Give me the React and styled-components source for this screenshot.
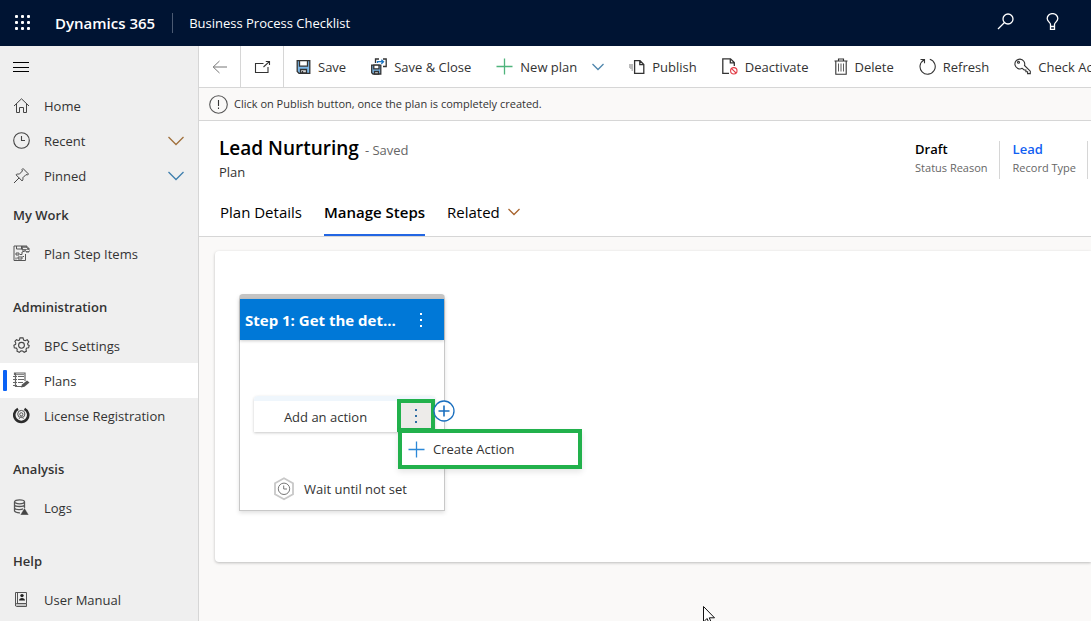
import React from "react";
import styled, { createGlobalStyle } from "styled-components";

const Global = createGlobalStyle`
  * { box-sizing: border-box; }
  body {
    margin: 0;
    font-family: "Open Sans", "Noto Sans", sans-serif;
    font-size: 13px;
    line-height: 20px;
    color: #333;
    background: #faf9f8;
    overflow: hidden;
  }
  button {
    font: inherit;
    color: inherit;
    background: none;
    border: 0;
    padding: 0;
    cursor: pointer;
  }
  a { color: inherit; text-decoration: none; }
  h1, h2, h3, p, ul { margin: 0; padding: 0; font: inherit; list-style: none; }
  svg { display: block; flex: none; }
`;

const Page = styled.div`
  display: flex;
  flex-direction: column;
  height: 100vh;
  overflow: hidden;
`;

const TopBar = styled.header`
  display: flex;
  align-items: center;
  flex: none;
  height: 46px;
  padding: 0 32px 0 14px;
  background: #001433;
  color: #fff;
`;

const Brand = styled.span`
  margin-left: 24px;
  padding-right: 17px;
  font-size: 15px;
  font-weight: 600;
  white-space: nowrap;
`;

const AppName = styled.span`
  padding-left: 16px;
  border-left: 1px solid #4b5a72;
  white-space: nowrap;
`;

const TopActions = styled.div`
  display: flex;
  gap: 32px;
  margin-left: auto;
  padding-bottom: 4px;
`;

const Body = styled.div`
  display: flex;
  flex: 1;
  min-height: 0;
`;

const Sidebar = styled.nav`
  flex: none;
  width: 199px;
  background: #efefef;
  border-right: 1px solid #d6d6d6;
`;

const MenuToggle = styled.button`
  display: flex;
  align-items: center;
  width: 100%;
  height: 42px;
  padding-left: 13px;
`;

const NavHeading = styled.h2`
  height: 43px;
  margin-top: ${(p) => (p.$first ? 0 : 14)}px;
  padding-left: 13px;
  font-weight: 600;
  line-height: 45px;
`;

const NavLink = styled.a`
  position: relative;
  display: flex;
  align-items: center;
  gap: 14px;
  height: 35px;
  padding: 0 14px 0 13px;
  background: ${(p) => (p.$active ? "#fff" : "transparent")};

  &::before {
    content: "";
    display: ${(p) => (p.$active ? "block" : "none")};
    position: absolute;
    left: 3px;
    top: 7px;
    width: 4px;
    height: 21px;
    border-radius: 1px;
    background: #0b62f5;
  }

  svg:last-child:not(:first-child) { margin-left: auto; }
`;

const Main = styled.main`
  flex: 1;
  min-width: 0;
  overflow: hidden;
`;

const CommandBar = styled.div`
  display: flex;
  height: 42px;
  background: #fff;
  border-bottom: 1px solid #d6d6d6;
  overflow: hidden;
`;

const IconCommand = styled.button`
  display: flex;
  flex: none;
  align-items: center;
  justify-content: center;
  width: ${(p) => p.$width}px;
  border-right: 1px solid #d6d6d6;
`;

const CommandList = styled.div`
  display: flex;
`;

const Command = styled.button`
  display: flex;
  flex: none;
  align-items: center;
  gap: 7px;
  padding: 0 13px 0 12px;
  white-space: nowrap;
`;

const SplitChevron = styled.span`
  margin-left: 8px;
`;

const Notice = styled.p`
  display: flex;
  align-items: center;
  gap: 6px;
  height: 33px;
  padding-left: 10px;
  background: #faf9f8;
  border-bottom: 1px solid #d6d6d6;
  font-size: 11px;
`;

const RecordHeader = styled.section`
  background: #fff;
  border-bottom: 1px solid #d6d6d6;
`;

const RecordTop = styled.div`
  display: flex;
  justify-content: space-between;
  padding: 14px 3px 0 20px;
`;

const Title = styled.h1`
  font-size: 19px;
  font-weight: 600;
  line-height: 26px;
  color: #000;
  white-space: nowrap;
`;

const Saved = styled.span`
  padding-left: 6px;
  font-size: 13px;
  font-weight: 400;
  line-height: 13px;
  color: #666;
`;

const EntityName = styled.p`
  font-weight: 500;
  line-height: 22px;
`;

const Fields = styled.div`
  display: flex;
  margin-top: 6px;
`;

const Field = styled.div`
  height: 38px;
  padding: 0 11px 0 13px;
  border-right: 1px solid #d6d6d6;
  font-size: 11px;
  line-height: 20px;
  color: #666;
  white-space: nowrap;
`;

const FieldValue = styled.div`
  display: block;
  font-size: 13px;
  font-weight: 600;
  line-height: 17px;
  color: ${(p) => (p.$link ? "#1160f2" : "#000")};
`;

const Tabs = styled.div`
  display: flex;
  gap: 22px;
  height: 53px;
  padding-left: 21px;
`;

const Tab = styled.button`
  display: flex;
  align-items: center;
  gap: 8px;
  height: 53px;
  padding-top: 6px;
  border-bottom: 2px solid ${(p) => (p.$active ? "#2266e3" : "transparent")};
  font-size: 15px;
  font-weight: ${(p) => (p.$active ? 600 : 400)};
  color: #000;
  white-space: nowrap;
`;

const Canvas = styled.section`
  margin: 14px 0 0 16px;
  padding: 43px 24px 51px;
  background: #fff;
  border-radius: 4px 0 0 4px;
  box-shadow: 0 1px 3px rgba(0, 0, 0, 0.25);
`;

const StepCard = styled.article`
  width: 206px;
  border: 1px solid #c8c8c8;
  border-top: 5px solid #c4c4c4;
  border-radius: 4px 4px 0 0;
  box-shadow: 0 2px 4px rgba(0, 0, 0, 0.12);
`;

const StepHeader = styled.header`
  display: flex;
  align-items: center;
  justify-content: space-between;
  height: 41px;
  padding: 0 16px 0 5px;
  background: #0078d7;
  color: #fff;
  box-shadow: 0 1px 3px rgba(0, 0, 0, 0.2);
`;

const StepTitle = styled.h3`
  font-size: 15px;
  font-weight: 700;
`;

const StepBody = styled.div`
  padding: 56px 9px 9px 14px;
`;

const ActionRow = styled.div`
  position: relative;
  display: flex;
  height: 36px;
  border-top: 5px solid #eff6fc;
  border-radius: 4px 4px 0 0;
  box-shadow: 0 1px 3px rgba(0, 0, 0, 0.22);
`;

const AddAction = styled.button`
  flex: 1;
`;

const MoreButton = styled.button`
  display: flex;
  align-items: center;
  justify-content: center;
  width: 38px;
  height: 33px;
  margin-top: -2px;
  border: 4px solid #22b14c;
  background: #edebe9;
`;

const AddStep = styled.button`
  position: absolute;
  left: 179px;
  top: -1px;
`;

const ActionMenu = styled.div`
  position: absolute;
  left: 144px;
  top: 28px;
  z-index: 1;
  width: 184px;
  border: 4px solid #22b14c;
  background: #fff;
  box-shadow: 0 3px 6px rgba(0, 0, 0, 0.1);
`;

const MenuItem = styled.button`
  display: flex;
  align-items: center;
  gap: 8px;
  width: 100%;
  height: 32px;
  padding-left: 6px;
`;

const WaitRow = styled.div`
  display: flex;
  align-items: center;
  gap: 10px;
  margin-top: 45px;
  padding-left: 20px;
  height: 24px;
`;

const Pointer = styled.div`
  position: absolute;
  left: 703px;
  top: 606px;
  height: 15px;
  overflow: hidden;
  pointer-events: none;
`;

const Svg = ({ w = 16, h = w, color = "#333", sw = 1, children }) => (
  <svg width={w} height={h} viewBox={`0 0 ${w} ${h}`} fill="none" stroke={color} strokeWidth={sw} aria-hidden="true">
    {children}
  </svg>
);

const Waffle = () => (
  <Svg w={17} h={16}>
    {[0, 6, 12].map((y) =>
      [1, 7, 13].map((x) => (
        <rect key={`${x}-${y}`} x={x} y={y} width="3" height="3" rx="1" fill="#fff" stroke="none" />
      ))
    )}
  </Svg>
);
const SearchIcon = () => (
  <Svg w={17} color="#fff" sw={1.3}>
    <circle cx="11" cy="6" r="5" />
    <path d="M7.5 9.5L1 16" />
  </Svg>
);
const BulbIcon = () => (
  <Svg w={13} h={17} color="#fff" sw={1.3}>
    <path d="M4.5 13.5V11.5C4.5 9.5 1.2 8.5 1.2 5.6a5.3 5 0 0 1 10.6 0C11.8 8.5 8.5 9.5 8.5 11.5V16.3H4.5V13.5H8.5" />
  </Svg>
);
const Burger = () => (
  <Svg color="#000">
    <path d="M0 3.5H16M0 8.5H16M0 12.5H16" />
  </Svg>
);
const HomeIcon = () => (
  <Svg w={17} color="#444">
    <path d="M1 9L8.5 1.8L16 9M3.5 7V15.5H6.5V10.5H10.5V15.5H13.5V7" />
  </Svg>
);
const ClockIcon = () => (
  <Svg w={17} color="#444" sw={1.1}>
    <circle cx="8.5" cy="8.5" r="7.8" />
    <path d="M8.5 4V8.5H12" />
  </Svg>
);
const PinIcon = () => (
  <Svg w={17} color="#444">
    <path d="M10 1.5L15.5 7L14.5 8L13 7.6L9.8 10.8C10.2 12.2 9.8 13.2 9.2 14L3 7.8C3.8 7 5 6.8 6.3 7.2L9.4 4L9 2.5ZM6.1 10.9L1 16" />
  </Svg>
);
const Chevron = ({ w = 16, color = "#666" }) => (
  <Svg w={w} h={w / 2 + 2} color={color} sw={1.3}>
    <path d={`M.5 1L${w / 2} ${w / 2 + 0.5}L${w - 0.5} 1`} />
  </Svg>
);
const StepItemsIcon = () => (
  <Svg w={17} color="#555">
    <path d="M9 1H1V15.5H12.5V9M3.5 1V4H8.5V1M3 8H6V10H3ZM5 12H9V14H5ZM7 9.5H9V7L12 6M3 12.5V14.5M9.5 11.5H11" />
    <path d="M9 1H14V3H16V7H13V5H9Z" fill="#888" />
    <path d="M10 3.5H14M13 5.5H16" stroke="#efefef" />
  </Svg>
);
const GearIcon = () => (
  <Svg w={17} color="#444" sw={1.1}>
    <path d="M7 .9H10L10.6 3L12.2 3.7L14.2 2.8L15.8 4.8L14.6 6.7L14.9 7.8L16.2 8.5L15.6 10.8L13.8 11L13 12.2L13.4 14.1L11.2 15.3L9.7 14L8 13.9L6.3 15.3L4 14.2L4.2 12.3L3.4 11.1L1.3 10.8L.9 8.3L2.6 7.3L2.8 6.1L1.9 4.4L3.5 2.7L5.3 3.5L6.4 3Z" />
    <circle cx="8.5" cy="8.3" r="2.9" />
  </Svg>
);
const PlansIcon = () => (
  <Svg w={17} color="#666" sw={1.2}>
    <path d="M12 9V1H1.5V3M2.5 1V14.5H9M0 4.5H4M0 7.5H4M0 10.5H4M0 13.5H4M5 4.5H11M5 7.5H11M5 10.5H10" />
    <path d="M8 15.5L9 12.5L14 8.5L16.5 10.5L11.5 14.8Z" fill="#555" stroke="none" />
    <path d="M3 2.5H11" stroke="#888" />
  </Svg>
);
const LicenseIcon = () => (
  <Svg w={17} color="#2b2b2b">
    <path d="M5 1.8A7 7 0 1 0 11.5 1.8" strokeWidth="2.6" />
    <circle cx="8.3" cy="7" r="3.6" stroke="#555" />
    <circle cx="8.3" cy="7.3" r="1.6" stroke="#555" />
    <path d="M6 12L8.3 9L10.6 12" stroke="#777" />
  </Svg>
);
const LogsIcon = () => (
  <Svg w={17} color="#555" sw={1.3}>
    <ellipse cx="6.5" cy="2.8" rx="5" ry="2" />
    <path d="M1.5 3V12C2.2 13.2 4 13.9 7 13.8M11.5 3V9M1.5 6C2.5 8 10.5 8 11.5 6M1.5 9C2.5 11 8.5 11.2 10 9.8" />
    <path d="M11.5 8.8L15.8 16H7.2Z" fill="#444" stroke="#efefef" strokeWidth=".4" />
  </Svg>
);
const ManualIcon = () => (
  <Svg w={17} color="#555">
    <path d="M2.5 14V1.5H13.5V12.5H3.5C2 12.5 2 15.5 3.5 15.5H13.5V12.5M4.5 1.5V12.5" />
    <path d="M3 14H13" stroke="#999" />
    <circle cx="9" cy="4.6" r="1.7" fill="#222" stroke="none" />
    <path d="M6 9.5C6 6 12 6 12 9.5Z" fill="#222" stroke="none" />
  </Svg>
);
const BackIcon = () => (
  <Svg w={15} h={14} color="#777">
    <path d="M7.5 1L1.2 7L7.5 13M1.2 7H15" />
  </Svg>
);
const PopoutIcon = () => (
  <Svg w={17} h={14} color="#333" sw={1.1}>
    <path d="M9.5 3.5H1.5V12.5H14V7M9.5 7L15.3 1.6M11.8 1.5H15.5V5" />
  </Svg>
);
const SaveIcon = () => (
  <Svg w={15} sw={1.3}>
    <path d="M1.2 1.7H13.8V14.3H3L1.2 12.5Z" fill="#7db8e8" />
    <path d="M3.5 1.7H11.5V7.2H3.5Z" fill="#fff" />
    <path d="M4.5 14V10.5H10.5V14Z" fill="#ddd" />
    <path d="M6.5 12V14" />
  </Svg>
);
const SaveCloseIcon = () => (
  <Svg w={16} h={17} sw={1.3}>
    <path d="M.7 7.2H9.8V16H2L.7 14.8Z" fill="#7db8e8" />
    <path d="M2.8 7.2H8V10.8H2.8Z" fill="#fff" />
    <path d="M3.5 16V13.5H7.5V16Z" fill="#ddd" />
    <path d="M4.5 5V1H8M12 1H15.2V8.5H12" />
    <path d="M6.5 5V3.7H12M10.3 1.7L12.5 3.7L10.3 5.8" stroke="#1a73c0" />
  </Svg>
);
const PlusIcon = ({ color }) => (
  <Svg w={17} color={color} sw={1.3}>
    <path d="M8.5 .5V16.5M.5 8.5H16.5" />
  </Svg>
);
const PublishIcon = () => (
  <Svg w={16} sw={1.3}>
    <path d="M5.6 1.7H11L14.8 5.5V14.4H5.6ZM10.8 2V5.7H14.5" />
    <path d="M0 5H1V9H0ZM1 5H2.5V10H1ZM2.5 5H4V12H2.5Z" fill="#bbb" stroke="none" />
  </Svg>
);
const DeactivateIcon = () => (
  <Svg w={16} h={17} sw={1.3}>
    <path d="M7 15.4H.8V.8H8.5L12.3 4.6V8M8.3 1V4.8H12" />
    <g stroke="#e23b45" strokeWidth="1.1">
      <circle cx="11.8" cy="12.8" r="3.2" />
      <path d="M9.6 10.6L14 15" />
    </g>
  </Svg>
);
const DeleteIcon = () => (
  <Svg w={14} h={17} sw={1.1}>
    <path d="M.5 3H13.5M4.5 3V1H9.5V3M1.8 3V16.2H12.2V3" />
    <path d="M4.5 5.5V13.5M7 5.5V13.5M9.5 5.5V13.5" strokeWidth=".8" />
  </Svg>
);
const RefreshIcon = () => (
  <Svg w={17} h={17} sw={1.1}>
    <path d="M10.8 1.3A7.6 7.6 0 1 1 5 1.9M1.5 1.5H5.5V5.2" />
  </Svg>
);
const KeyIcon = () => (
  <Svg w={17} h={17} sw={1.1}>
    <path d="M8.2 10.3A4.9 4.9 0 1 1 10.5 7.5L16.3 13.2V15.6H13.6V13.8H11.9V12H10.2Z" />
    <circle cx="4.5" cy="4.3" r="1" />
  </Svg>
);
const NoticeIcon = () => (
  <Svg w={19} color="#555" sw={1.1}>
    <circle cx="9.5" cy="9.5" r="8.8" />
    <path d="M9.5 5V11M9.5 12.5V14" stroke="#333" />
  </Svg>
);
const Dots = ({ color }) => (
  <Svg w={14} h={16}>
    {[1, 7, 13].map((y) => (
      <rect key={y} x="6" y={y} width="2" height="2" fill={color} stroke="none" />
    ))}
  </Svg>
);
const AddCircle = () => (
  <Svg w={22} color="#1a6fbf" sw={1.3}>
    <circle cx="11" cy="11" r="10" fill="#fff" />
    <path d="M11 5.5V16.5M5.5 11H16.5" strokeWidth="1.6" />
  </Svg>
);
const WaitIcon = () => (
  <Svg w={20} h={24} color="#c8c8c8" sw={1.8}>
    <path d="M10 1.2L19 6.3V17.2L10 22.3L1 17.2V6.3Z" />
    <g stroke="#777" strokeWidth="1">
      <circle cx="10" cy="11.8" r="5.7" />
      <path d="M9.7 8.5V12H13" />
    </g>
  </Svg>
);

const navGroups = [
  {
    items: [
      { label: "Home", Icon: HomeIcon },
      { label: "Recent", Icon: ClockIcon, chevron: "#a0703c" },
      { label: "Pinned", Icon: PinIcon, chevron: "#3f7fae" },
    ],
  },
  { heading: "My Work", items: [{ label: "Plan Step Items", Icon: StepItemsIcon }] },
  {
    heading: "Administration",
    items: [
      { label: "BPC Settings", Icon: GearIcon },
      { label: "Plans", Icon: PlansIcon, active: true },
      { label: "License Registration", Icon: LicenseIcon },
    ],
  },
  { heading: "Analysis", items: [{ label: "Logs", Icon: LogsIcon }] },
  { heading: "Help", items: [{ label: "User Manual", Icon: ManualIcon }] },
];

const commands = [
  { label: "Save", icon: <SaveIcon /> },
  { label: "Save & Close", icon: <SaveCloseIcon /> },
  { label: "New plan", icon: <PlusIcon color="#4fb47c" />, split: true },
  { label: "Publish", icon: <PublishIcon /> },
  { label: "Deactivate", icon: <DeactivateIcon /> },
  { label: "Delete", icon: <DeleteIcon /> },
  { label: "Refresh", icon: <RefreshIcon /> },
  { label: "Check Access", icon: <KeyIcon /> },
];

export default function App() {
  return (
    <Page>
      <Global />
      <TopBar>
        <button aria-label="App launcher"><Waffle /></button>
        <Brand>Dynamics 365</Brand>
        <AppName>Business Process Checklist</AppName>
        <TopActions>
          <button aria-label="Search"><SearchIcon /></button>
          <button aria-label="Ideas"><BulbIcon /></button>
        </TopActions>
      </TopBar>
      <Body>
        <Sidebar>
          <MenuToggle aria-label="Toggle menu"><Burger /></MenuToggle>
          {navGroups.map((group, i) => (
            <div key={i}>
              {group.heading && <NavHeading $first={i === 1}>{group.heading}</NavHeading>}
              {group.items.map(({ label, Icon, chevron, active }) => (
                <NavLink key={label} href="#" $active={active}>
                  <Icon />
                  {label}
                  {chevron && <Chevron color={chevron} />}
                </NavLink>
              ))}
            </div>
          ))}
        </Sidebar>
        <Main>
          <CommandBar>
            <IconCommand $width={42} aria-label="Back"><BackIcon /></IconCommand>
            <IconCommand $width={43} aria-label="Open in new window"><PopoutIcon /></IconCommand>
            <CommandList>
              {commands.map((c) => (
                <Command key={c.label}>
                  {c.icon}
                  {c.label}
                  {c.split && <SplitChevron><Chevron w={12} color="#4f86ad" /></SplitChevron>}
                </Command>
              ))}
            </CommandList>
          </CommandBar>
          <Notice>
            <NoticeIcon />
            Click on Publish button, once the plan is completely created.
          </Notice>
          <RecordHeader>
            <RecordTop>
              <div>
                <Title>Lead Nurturing<Saved>- Saved</Saved></Title>
                <EntityName>Plan</EntityName>
              </div>
              <Fields>
                <Field><FieldValue>Draft</FieldValue>Status Reason</Field>
                <Field><FieldValue $link as="a" href="#">Lead</FieldValue>Record Type</Field>
              </Fields>
            </RecordTop>
            <Tabs role="tablist">
              <Tab role="tab">Plan Details</Tab>
              <Tab role="tab" $active>Manage Steps</Tab>
              <Tab role="tab">Related <Chevron w={12} color="#a8642d" /></Tab>
            </Tabs>
          </RecordHeader>
          <Canvas>
            <StepCard>
              <StepHeader>
                <StepTitle>Step 1: Get the det...</StepTitle>
                <button aria-label="Step options"><Dots color="#fff" /></button>
              </StepHeader>
              <StepBody>
                <ActionRow>
                  <AddAction>Add an action</AddAction>
                  <MoreButton aria-label="More actions"><Dots color="#2f6da3" /></MoreButton>
                  <AddStep aria-label="Add step"><AddCircle /></AddStep>
                  <ActionMenu>
                    <MenuItem><PlusIcon color="#2b88d8" />Create Action</MenuItem>
                  </ActionMenu>
                </ActionRow>
                <WaitRow><WaitIcon />Wait until not set</WaitRow>
              </StepBody>
            </StepCard>
          </Canvas>
        </Main>
      </Body>
      <Pointer>
        <Svg w={12} h={19} color="#111">
          <path d="M.5 .5V16L4 12.5L6.5 18L8.5 17L6.3 11.8H11.5Z" fill="#fff" />
        </Svg>
      </Pointer>
    </Page>
  );
}
